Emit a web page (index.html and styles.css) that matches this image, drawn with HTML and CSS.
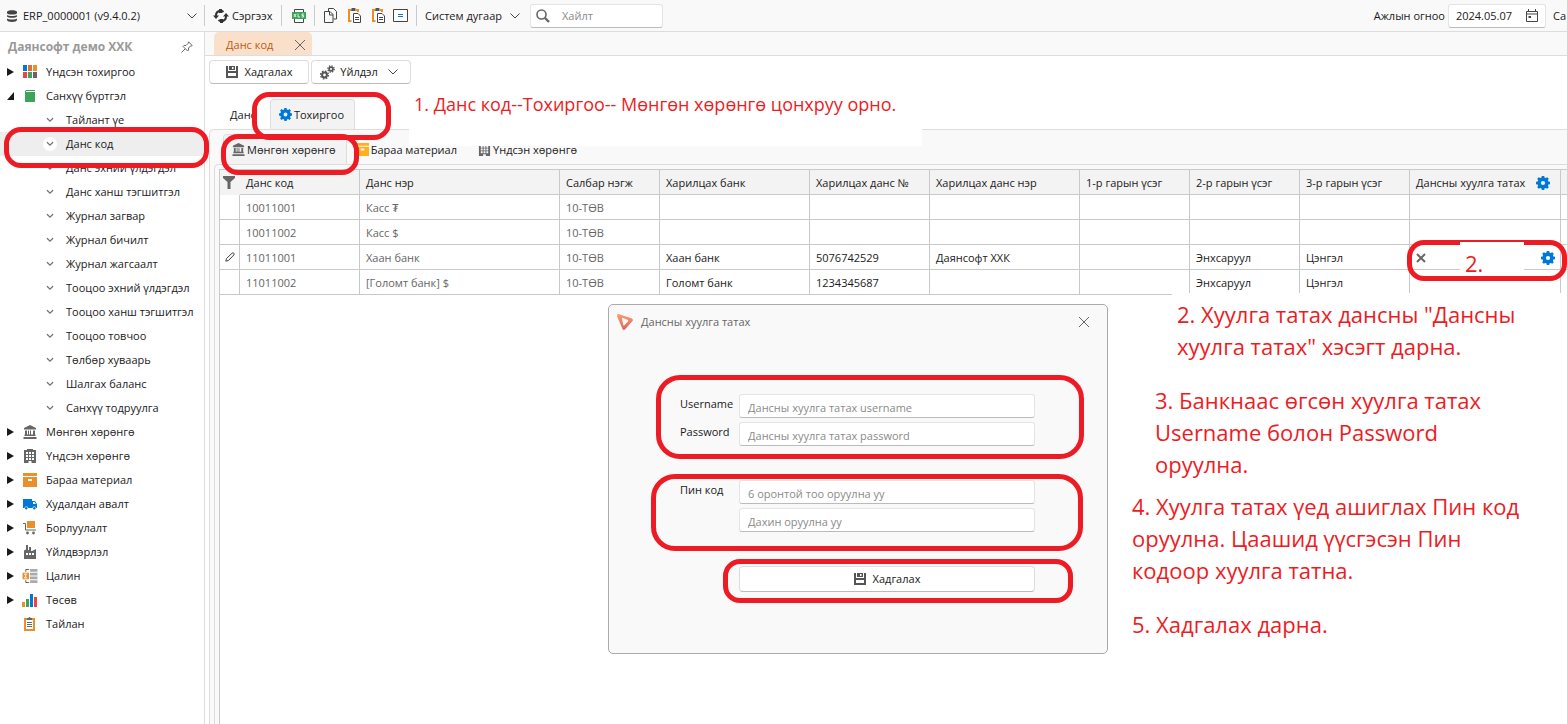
FILE: index.html
```html
<!DOCTYPE html>
<html lang="mn">
<head>
<meta charset="utf-8">
<title>Даянсофт ERP</title>
<link rel="stylesheet" href="styles.css">
</head>
<body>
<svg class="defs" aria-hidden="true">
  <symbol id="chev" viewBox="0 0 10 6"><path d="M.5.5 5 5 9.500.5" fill="none" stroke="#444"/></symbol>
  <symbol id="mini" viewBox="0 0 7 5"><path d="M.7.8 3.500 3.500 6.300.8" fill="none" stroke="#777" stroke-width="1.200"/></symbol>
  <symbol id="x" viewBox="0 0 12 12"><path d="M1 1 11 11M11 1 1 11" fill="none" stroke="#666"/></symbol>
  <symbol id="save" viewBox="0 0 12 12"><path fill="#555" fill-rule="evenodd" d="M0 0h2v5h8V0h2v12H0ZM2 7v3h8V7ZM3 0h6v4H3ZM6 1v2h1.500V1Z"/></symbol>
  <symbol id="gear" viewBox="0 0 14 14"><path fill-rule="evenodd" d="M5.800 0h2.400l.3 1.600 1.300.5L11.200 1.200 12.800 2.800 11.900 4.200l.5 1.300L14 5.800v2.400l-1.600.3-.5 1.300.9 1.400L11.200 12.800l-1.400-.9-1.300.5L8.200 14H5.800l-.3-1.600-1.300-.5-1.400.9L1.200 11.200l.9-1.400-.5-1.300L0 8.200V5.800l1.600-.3.5-1.300-.9-1.400L2.800 1.200l1.400.9 1.300-.5ZM7 4.900a2.100 2.100 0 1 0 0 4.200 2.100 2.100 0 0 0 0-4.200Z"/></symbol>
  <symbol id="bank" viewBox="0 0 14 14"><path fill="#666" d="M7 0 13 3v1.500H1V3ZM2 5.500h2v4H2Zm3 0h1v4H5Zm2 0h1v4H7Zm3 0h2v4h-2ZM1.500 9.500h11V11h-11ZM.5 12h13v2H.5Z"/></symbol>
  <symbol id="build" viewBox="0 0 12 14"><path fill="#666" fill-rule="evenodd" d="M3 0h6v1h3v13H7.500v-2h-3v2H0V1h3ZM2 3v2h2V3Zm3 0v2h2V3Zm3 0v2h2V3ZM2 6v2h2V6Zm3 0v2h2V6Zm3 0v2h2V6ZM2 9v2h2V9Zm3 0v2h2V9Zm3 0v2h2V9Z"/></symbol>
  <symbol id="box" viewBox="0 0 14 14"><path fill-rule="evenodd" d="M0 0h14v3H0ZM0 4h14v10H0ZM5 6v2h4V6Z"/></symbol>
  <symbol id="paste" viewBox="0 0 13 15"><path d="M4 2H1v11h2.500M8 2h2v2" fill="none" stroke="#e8902c" stroke-width="2"/><path d="M3.500 0h4v3h-4Z" fill="#555"/><path d="M5.500 5.500h4.500l2.500 2.500v6.500h-7Z" fill="#fff" stroke="#444"/><path d="M7 9.500h4M7 11.500h4" stroke="#444"/></symbol>
</svg>

<div class="app">
  <header class="topbar">
    <div class="company">
      <svg class="db" viewBox="0 0 10 12"><g fill="#444"><path d="M0 2c0-2.500 10-2.500 10 0v1C10 5 0 5 0 3Z"/><path d="M0 5c1.500 1.300 8.500 1.300 10 0v1.500c-1 1.800-9 1.800-10 0Z"/><path d="M0 8.500c1.500 1.300 8.500 1.300 10 0V10c0 2.500-10 2.500-10 0Z"/></g></svg>
      <select class="pick" aria-label="Компани"><option>ERP_0000001 (v9.4.0.2)</option></select>
      <svg class="chev"><use href="#chev"/></svg>
    </div>
    <button class="flat refresh"><svg viewBox="0 0 16 14"><g fill="none" stroke="#333" stroke-width="2"><path d="M3 9V6.500A4.500 4.500 0 0 1 10.500 3"/><path d="M13 5v2.500A4.500 4.500 0 0 1 5.500 11"/></g><path fill="#333" d="M0 6.500h6L3 10ZM10 7.500h6L13 4ZM6 0h3v4H6ZM7 10h3v4H7Z"/></svg>Сэргээх</button>
    <div class="group"><button class="flat" aria-label="XLS"><svg class="xls" viewBox="0 0 14 14"><path d="M2.500 4V.5h9V4M2.500 10v3.500h9V10" fill="#fff" stroke="#444"/><path fill="#3fa45b" d="M0 3h14v7H0Z"/><path d="m2 5 2 3M4 5 2 8M6 4.500V8h2M12 5h-2v1.500h1.500V8H9.500" fill="none" stroke="#fff" stroke-width=".8"/></svg></button></div>
    <div class="group files">
      <button class="flat" aria-label="Хуулах"><svg class="i14" viewBox="0 0 13 15"><path d="M4.500 3.500v-3h5l3 3v7.500h-3M.5 3.500h5.500l3 3v8H.5ZM5.500 3.500V7h3.500" fill="none" stroke="#444"/></svg></button>
      <button class="flat" aria-label="Буулгах"><svg class="i14"><use href="#paste"/></svg></button>
      <button class="flat" aria-label="Тусгай буулгах"><svg class="i14"><use href="#paste"/></svg></button>
      <button class="flat" aria-label="Тэнцүү"><svg class="eq" viewBox="0 0 15 13"><path d="M.5.5h14v12H.5Z" fill="#fff" stroke="#444"/><path d="M5 5.500h5M5 7.500h5" stroke="#0078d7"/></svg></button>
    </div>
    <button class="flat system">Систем дугаар<svg class="chev"><use href="#chev"/></svg></button>
    <div class="search"><svg viewBox="0 0 14 14"><circle cx="5.500" cy="5.500" r="4.500" fill="none" stroke="#666" stroke-width="1.600"/><path d="m9 9 4 4" stroke="#666" stroke-width="2.400"/></svg><input type="text" placeholder="Хайлт" aria-label="Хайлт"></div>
    <div class="right">
      <label for="date">Ажлын огноо</label>
      <div class="date"><input id="date" type="text" value="2024.05.07"><svg viewBox="0 0 12 13"><path d="M.5 2.500h11v10H.5ZM.5 5h11M2.500 0v2.500M9.500 0v2.500" fill="none" stroke="#444"/><path d="M2.500 7h2.500v2H2.500Z" fill="#444"/></svg></div>
      <span>Са</span>
    </div>
  </header>

  <aside class="side">
    <div class="side-title"><b>Даянсофт демо ХХК</b><svg viewBox="0 0 12 12"><path d="m7.500.8 3.700 3.700-1 .5-.6-.1L7.500 7l.1 2-1 1L2 5.400l1-1 2 .1 2.100-2.100ZM4 8 .5 11.500" fill="none" stroke="#666"/></svg></div>
    <ul class="tree">
      <li><i class="tri"></i><svg viewBox="0 0 14 14"><path fill="#0078d7" d="M0 0h4v6H0Z"/><path fill="#e9663b" d="M5 0h4v6H5Z"/><path fill="#e8902c" d="M10 0h4v6h-4Z"/><path fill="#ee4444" d="M0 7h4v6H0Z"/><path fill="#3fa45b" d="M5 7h4v6H5Z"/><path fill="#666" d="M10 7h4v6h-4Z"/></svg>Үндсэн тохиргоо</li>
      <li><i class="tri open"></i><svg viewBox="0 0 14 14"><path fill="#3fa45b" d="M3 1h9v1H3v1h9v10H2V2Z"/></svg>Санхүү бүртгэл</li>
      <li class="sub"><svg><use href="#mini"/></svg>Тайлант үе</li>
      <li class="sub on"><svg><use href="#mini"/></svg>Данс код</li>
      <li class="sub"><svg><use href="#mini"/></svg>Данс эхний үлдэгдэл</li>
      <li class="sub"><svg><use href="#mini"/></svg>Данс ханш тэгшитгэл</li>
      <li class="sub"><svg><use href="#mini"/></svg>Журнал загвар</li>
      <li class="sub"><svg><use href="#mini"/></svg>Журнал бичилт</li>
      <li class="sub"><svg><use href="#mini"/></svg>Журнал жагсаалт</li>
      <li class="sub"><svg><use href="#mini"/></svg>Тооцоо эхний үлдэгдэл</li>
      <li class="sub"><svg><use href="#mini"/></svg>Тооцоо ханш тэгшитгэл</li>
      <li class="sub"><svg><use href="#mini"/></svg>Тооцоо товчоо</li>
      <li class="sub"><svg><use href="#mini"/></svg>Төлбөр хуваарь</li>
      <li class="sub"><svg><use href="#mini"/></svg>Шалгах баланс</li>
      <li class="sub"><svg><use href="#mini"/></svg>Санхүү тодруулга</li>
      <li><i class="tri"></i><svg><use href="#bank"/></svg>Мөнгөн хөрөнгө</li>
      <li><i class="tri"></i><svg><use href="#build"/></svg>Үндсэн хөрөнгө</li>
      <li><i class="tri"></i><svg class="orange"><use href="#box"/></svg>Бараа материал</li>
      <li><i class="tri"></i><svg viewBox="0 0 14 14"><path fill="#0078d7" d="M0 2h9v2h3l2 3v4h-1a1.800 1.800 0 0 0-3.500 0H5a1.800 1.800 0 0 0-3.500 0H0Z"/><path fill="#fff" d="M10 5h1.500L13 7h-3Z"/><g fill="#0078d7"><circle cx="3.200" cy="11.200" r="1.200"/><circle cx="11.300" cy="11.200" r="1.200"/></g></svg>Худалдан авалт</li>
      <li><i class="tri"></i><svg viewBox="0 0 14 14"><path fill="#e8902c" d="M4 0h8v7H4Z"/><path d="M0 2.500h2.500v6.500H13" fill="none" stroke="#666"/><g fill="#666"><circle cx="4.500" cy="12" r="1.400"/><circle cx="10.500" cy="12" r="1.400"/></g></svg>Борлуулалт</li>
      <li><i class="tri"></i><svg viewBox="0 0 14 14"><path fill="#666" fill-rule="evenodd" d="M1 14V5.500L3 4.500V0h2v5h1V2h2v4h1l4-2v10ZM3 8v2h2V8Zm3 0v2h2V8Zm3 0v2h2V8Z"/></svg>Үйлдвэрлэл</li>
      <li><i class="tri"></i><svg class="wide" viewBox="0 0 16 15"><path fill="#aaa" d="M8 0h8v3H8Zm0 4h8v3H8Zm0 4h8v3H8Zm0 4h8v3H8Z"/><path d="M7 .5H3.500V3M7 14.500H3.500V12" fill="none" stroke="#555"/><path fill="#e8902c" d="M0 4h7v7H0Z"/><path d="M5 5.500H2l1.800 2L2 9.500h3" fill="none" stroke="#fff"/></svg>Цалин</li>
      <li><i class="tri"></i><svg class="wide" viewBox="0 0 16 14"><path fill="#e8902c" d="M0 9h3v5H0Z"/><path fill="#3fa45b" d="M4 6h3v8H4Z"/><path fill="#0078d7" d="M8 1h3v13H8Z"/><path fill="#ee4444" d="M12 4h3v10h-3Z"/></svg>Төсөв</li>
      <li><i class="tri none"></i><svg viewBox="0 0 14 14"><path d="M4 2H2v11h9V2H9" fill="none" stroke="#e8902c" stroke-width="2"/><path fill="#666" d="M4 1h1.500a1 1 0 0 1 2 0H9v2H4Z"/><path d="M4 5.500h5M4 7.500h5M4 9.500h5" stroke="#666"/></svg>Тайлан</li>
    </ul>
  </aside>

  <main class="main">
    <nav class="doc-tabs"><div class="doc-tab">Данс код<button class="flat" aria-label="Хаах"><svg><use href="#x"/></svg></button></div></nav>
    <div class="tools">
      <button class="btn"><svg><use href="#save"/></svg>Хадгалах</button>
      <button class="btn act"><svg class="gears" viewBox="0 0 15 15"><g fill="none" stroke="#555"><circle cx="4.500" cy="10" r="2.400" stroke-width="2"/><circle cx="4.500" cy="10" r="3.900" stroke-width="1.400" stroke-dasharray="1.600 1.463"/><circle cx="11" cy="4" r="1.900" stroke-width="1.700"/><circle cx="11" cy="4" r="3.200" stroke-width="1.300" stroke-dasharray="1.300 1.213"/></g></svg>Үйлдэл<svg class="chev"><use href="#chev"/></svg></button>
    </div>
    <div class="tabs">
      <button class="tab">Данс</button>
      <button class="tab on"><svg class="blue"><use href="#gear"/></svg>Тохиргоо</button>
    </div>
    <section class="panel">
      <div class="tabs inner">
        <button class="tab on"><svg><use href="#bank"/></svg>Мөнгөн хөрөнгө</button>
        <button class="tab"><svg class="amber"><use href="#box"/></svg>Бараа материал</button>
        <button class="tab"><svg><use href="#build"/></svg>Үндсэн хөрөнгө</button>
      </div>
      <div class="grid-wrap">
        <div class="grid">
        <table>
          <colgroup><col class="c20"><col class="c120"><col class="c200"><col class="c100"><col class="c150"><col class="c120"><col class="c150"><col class="c110"><col class="c110"><col class="c110"><col class="c151"><col></colgroup>
          <thead><tr><th class="mark"><svg viewBox="0 0 12 13"><path fill="#666" d="M0 0h12v2L7.500 6v7h-3V6L0 2Z"/></svg></th><th>Данс код</th><th>Данс нэр</th><th>Салбар нэгж</th><th>Харилцах банк</th><th>Харилцах данс №</th><th>Харилцах данс нэр</th><th>1-р гарын үсэг</th><th>2-р гарын үсэг</th><th>3-р гарын үсэг</th><th><span class="split">Дансны хуулга татах<svg class="blue"><use href="#gear"/></svg></span></th><th></th></tr></thead>
          <tbody>
            <tr><td></td><td class="ro">10011001</td><td class="ro">Касс ₮</td><td class="ro">10-ТӨВ</td><td></td><td></td><td></td><td></td><td></td><td></td><td></td><td></td></tr>
            <tr><td></td><td class="ro">10011002</td><td class="ro">Касс $</td><td class="ro">10-ТӨВ</td><td></td><td></td><td></td><td></td><td></td><td></td><td></td><td></td></tr>
            <tr><td class="mark"><svg class="pen" viewBox="0 0 10 10"><path d="M.8 9.200 1.500 6.500 7 1.200q1-.8 1.800 0t0 1.800L3.500 8.500Z" fill="none" stroke="#444"/></svg></td><td class="ro">11011001</td><td class="ro">Хаан банк</td><td class="ro">10-ТӨВ</td><td>Хаан банк</td><td>5076742529</td><td>Даянсофт ХХК</td><td></td><td>Энхсаруул</td><td>Цэнгэл</td><td class="edit"><span class="split"><svg class="del" viewBox="0 0 10 10"><path d="m1 1 8 8M9 1 1 9" stroke="#666" stroke-width="2"/></svg><svg class="blue"><use href="#gear"/></svg></span></td><td></td></tr>
            <tr><td></td><td class="ro">11011002</td><td class="ro">[Голомт банк] $</td><td class="ro">10-ТӨВ</td><td>Голомт банк</td><td>1234345687</td><td></td><td></td><td>Энхсаруул</td><td>Цэнгэл</td><td></td><td></td></tr>
          </tbody>
        </table>
        </div>
      </div>
    </section>
  </main>
</div>

<div class="note n1">1. Данс код--Тохиргоо-- Мөнгөн хөрөнгө цонхруу орно.</div>
<div class="note n2">2. Хуулга татах дансны "Дансны<br>хуулга татах" хэсэгт дарна.</div>
<div class="note n3">3. Банкнаас өгсөн хуулга татах<br>Username болон Password<br>оруулна.</div>
<div class="note n4">4. Хуулга татах үед ашиглах Пин код<br>оруулна. Цаашид үүсгэсэн Пин<br>кодоор хуулга татна.</div>
<div class="note n5">5. Хадгалах дарна.</div>

<form class="dialog" role="dialog" aria-label="Дансны хуулга татах">
  <div class="dlg-head"><svg class="logo" viewBox="0 0 16 16"><defs><linearGradient id="lg" x1="0" y1="0" x2="0" y2="1"><stop offset="0" stop-color="#fb9d6c"/><stop offset="1" stop-color="#d9655f"/></linearGradient></defs><path fill="url(#lg)" fill-rule="evenodd" d="M1.500 0 15 4.500q1.500 1 .5 2.500L8 15.500q-1.500 1-2.500-.5L0 2Q0 0 1.500 0ZM5 4.300 6.200 11q.5 1 1.500 0l3.300-3.500q.8-1-.5-1.800L6 4Q5 3.600 5 4.300Z"/></svg><span>Дансны хуулга татах</span><button type="button" class="flat" aria-label="Хаах"><svg><use href="#x"/></svg></button></div>
  <div class="fields">
    <label for="u">Username</label><input id="u" type="text" placeholder="Дансны хуулга татах username">
    <label for="p">Password</label><input id="p" type="text" placeholder="Дансны хуулга татах password">
    <label class="gap" for="pin">Пин код</label><input class="gap" id="pin" type="text" placeholder="6 оронтой тоо оруулна уу">
    <input class="again" type="text" placeholder="Дахин оруулна уу" aria-label="Пин код давтах">
    <button type="button" class="btn again"><svg><use href="#save"/></svg>Хадгалах</button>
  </div>
</form>

<div class="ring r-menu"></div>
<div class="ring r-tab"></div>
<div class="ring r-sub"></div>
<div class="ring r-cell"></div>
<div class="note n-cell">2.</div>
<div class="ring big r-user"></div>
<div class="ring big r-pin"></div>
<div class="ring r-save"></div>
</body>
</html>
```
FILE: styles.css
```css
* { box-sizing: border-box; }
body { margin: 0; position: relative; height: 100vh; overflow: hidden; background: #fff; color: #1a1a1a; font: 11px/16px "Open Sans", "Noto Sans", sans-serif; }
button, input, select { font: inherit; color: inherit; }
svg { flex: none; display: block; }
.defs { position: absolute; width: 0; height: 0; }
.flat { border: 0; background: none; padding: 0; display: flex; align-items: center; }
.chev { width: 10px; height: 6px; }
.blue { fill: #0078d7; width: 14px; height: 14px; }
.orange { fill: #e8902c; }

.app { display: grid; grid-template: 32px 1fr / 205px minmax(0, 1fr); height: 100vh; }
.topbar { grid-column: 1 / 3; display: flex; align-items: center; background: #f9f9f9; border-bottom: 1px solid #ddd; white-space: nowrap; overflow: hidden; }
.company { display: flex; align-items: center; width: 204px; padding: 0 7px; gap: 6px; }
.db { width: 10px; height: 12px; }
.pick { appearance: none; border: 0; background: none; padding: 0; flex: 1; }
.refresh, .group, .system { border-left: 1px solid #ccc; height: 21px; }
.refresh { padding-left: 8px; width: 77px; gap: 3px; }
.refresh svg { width: 16px; height: 14px; }
.group { display: flex; align-items: center; width: 33px; padding-left: 10px; }
.xls { width: 14px; height: 14px; }
.files { width: 102px; padding-left: 9px; gap: 11px; }
.files .flat:last-child { margin-left: -3px; }
.i14 { width: 13px; height: 15px; }
.eq { width: 15px; height: 13px; }
.system { width: 114px; padding: 0 10px 0 8px; justify-content: space-between; }
.search { display: flex; align-items: center; width: 133px; height: 24px; padding-left: 5px; gap: 12px; background: #fff; border: 1px solid #e4e4e4; border-bottom-color: #bbb; border-radius: 3px; }
.search svg { width: 14px; height: 14px; }
.search input, .date input { border: 0; padding: 0; background: none; outline: 0; width: 0; flex: 1; }
::placeholder { color: #8a8a8a; opacity: 1; }
.right { display: flex; align-items: center; margin-left: auto; padding-right: 1px; gap: 3px; }
.date { display: flex; align-items: center; width: 98px; height: 24px; padding: 0 7px; background: #fff; border: 1px solid #e4e4e4; border-bottom-color: #bbb; border-radius: 3px; }
.date svg { width: 12px; height: 13px; }
.right > span { margin-left: 4px; }

.side { border-right: 1px solid #ddd; }
.side-title { display: flex; align-items: center; justify-content: space-between; height: 28px; padding: 2px 11px 0 8px; color: #999; font-size: 12px; }
.side-title svg { width: 12px; height: 12px; }
.tree { list-style: none; margin: 0; padding: 0; }
.tree li { display: flex; align-items: center; height: 24px; padding-left: 7px; white-space: nowrap; }
.tree li > svg { width: 14px; height: 14px; margin-left: 9px; margin-right: 9px; }
.tree li > .wide { width: 16px; margin-right: 8px; margin-left: 8px; }
.tri { width: 7px; height: 8px; background: #1a1a1a; clip-path: polygon(0 0, 100% 50%, 0 100%); }
.tri.open { clip-path: polygon(100% 0, 100% 100%, 0 100%); }
.tri.none { visibility: hidden; }
.tree .sub { padding-left: 43px; }
.tree .sub > svg { width: 14px; height: 14px; padding: 4px 3px; margin: 0 9px 0 0; border-radius: 50%; }
.tree .on { background: #eee; }
.tree .on > svg { background: #fff; }

.main { display: flex; flex-direction: column; min-width: 0; }
.doc-tabs { height: 24px; padding-left: 9px; display: flex; background: #f9f9f9; border-bottom: 1px solid #ddd; }
.doc-tab { display: flex; align-items: center; justify-content: space-between; width: 98px; padding: 2px 6px 0 12px; background: #fae0cb; color: #c05a10; border-radius: 5px 5px 0 0; white-space: nowrap; }
.doc-tab svg, .dlg-head .flat svg { width: 12px; height: 12px; }
.tools { display: flex; gap: 2px; padding: 4px 4px 15px; }
.btn { display: flex; align-items: center; justify-content: center; gap: 7px; width: 100px; height: 24px; padding: 0; background: #fff; border: 1px solid #ddd; border-bottom-color: #bbb; border-radius: 4px; white-space: nowrap; }
.btn svg { width: 12px; height: 12px; }
.btn .gears { width: 15px; height: 15px; margin-left: -4px; }
.btn.act { gap: 5px; }
.btn .chev { width: 10px; height: 6px; margin-left: 5px; }
.tabs { display: flex; padding-left: 9px; height: 30px; }
.tab { display: flex; align-items: center; gap: 2px; border: 1px solid transparent; border-bottom: 0; background: none; border-radius: 4px 4px 0 0; padding: 0 10px 0 8px; white-space: nowrap; }
.tab svg { width: 13px; height: 13px; }
.tabs > .tab:first-child { padding-left: 15px; padding-right: 13px; }
.tab.on { background: #f3f3f3; border-color: #ddd; }
.panel { flex: 1; display: flex; flex-direction: column; margin-left: 4px; border: 1px solid #ddd; border-width: 1px 0 0 1px; border-radius: 5px 0 0 0; background: #f9f9f9; padding: 4px 0 0 4px; }
.inner { height: 30px; padding-left: 9px; }
.inner > .tab:first-child { padding: 0 10px 0 8px; }
.inner .tab + .tab { padding-right: 11px; }
.amber { fill: #ffb01f; }
.grid-wrap { flex: 1; display: flex; border: 1px solid #ddd; border-width: 1px 0 0 1px; border-radius: 5px 0 0 0; padding: 4px 0 0 4px; }
.grid { flex: 1; min-width: 0; background: #fff; border-left: 1px solid #c9c9c9; border-top: 1px solid #c9c9c9; }
table { width: 100%; table-layout: fixed; border-collapse: separate; border-spacing: 0; }
.c20 { width: 20px; } .c100 { width: 100px; } .c110 { width: 110px; } .c120 { width: 120px; } .c150 { width: 150px; } .c151 { width: 151px; } .c200 { width: 200px; }
th, td { height: 25px; padding: 2px 0 0 6px; border: 1px solid #c9c9c9; border-width: 0 1px 1px 0; font-weight: 400; text-align: left; white-space: nowrap; overflow: hidden; }
th { background: #f3f3f3; }
th:last-child, td:last-child { border-right: 0; padding: 0; }
td.ro { color: #666; }
.mark { padding: 0 0 0 3px; }
th.mark { border-color: #f3f3f3; }
.mark svg { width: 12px; height: 13px; }
.mark .pen { width: 10px; height: 10px; margin-left: 2px; }
.split { display: flex; align-items: center; justify-content: space-between; padding-right: 10px; }
.edit .split { padding-right: 5px; }
.split .del { width: 10px; height: 10px; }

.dialog, .ring, .note { position: absolute; z-index: 1; }
.dialog { left: 608px; top: 304px; width: 500px; height: 350px; background: #f9f9f9; border: 1px solid #aaa; border-radius: 5px; }
.dlg-head { display: flex; align-items: center; gap: 8px; height: 34px; padding: 0 17px 0 8px; color: #666; }
.dlg-head .flat { margin-left: auto; }
.logo { width: 16px; height: 16px; }
.fields { display: grid; grid-template-columns: 59px 296px; row-gap: 4px; padding: 55px 0 0 71px; align-items: start; }
.fields label { padding-top: 2px; }
.fields input { height: 24px; padding: 2px 8px 0; background: #fff; border: 1px solid #e4e4e4; border-bottom-color: #bbb; border-radius: 3px; outline: 0; }
.fields .gap { margin-top: 30px; }
.fields .again { grid-column: 2; }
.fields .btn { width: auto; height: 26px; margin-top: 30px; }

.ring { border: 5px solid #ed1c24; border-radius: 17px; pointer-events: none; }
.ring.big { border-radius: 24px; }
.r-menu { left: 4px; top: 127px; width: 205px; height: 41px; }
.r-tab { left: 252px; top: 92px; width: 139px; height: 48px; }
.r-sub { left: 221px; top: 134px; width: 138px; height: 41px; }
.r-cell { left: 1407px; top: 240px; width: 160px; height: 41px; }
.r-user { left: 656px; top: 375px; width: 428px; height: 84px; }
.r-pin { left: 651px; top: 474px; width: 432px; height: 77px; }
.r-save { left: 723px; top: 559px; width: 350px; height: 44px; }
.note { color: #ed1c24; font-size: 22px; line-height: 32px; white-space: nowrap; background: #fff; }
.n1 { left: 409px; top: 90px; width: 513px; height: 56px; padding-left: 5px; font-size: 18px; line-height: 29px; }
.n2 { left: 1172px; top: 293px; width: 395px; padding: 5px 0 0 5px; }
.n3 { left: 1155px; top: 384px; }
.n4 { left: 1132px; top: 490px; }
.n5 { left: 1132px; top: 608px; }
.n-cell { left: 1460px; top: 242px; width: 64px; height: 32px; padding: 5px 0 0 5px; }
```
